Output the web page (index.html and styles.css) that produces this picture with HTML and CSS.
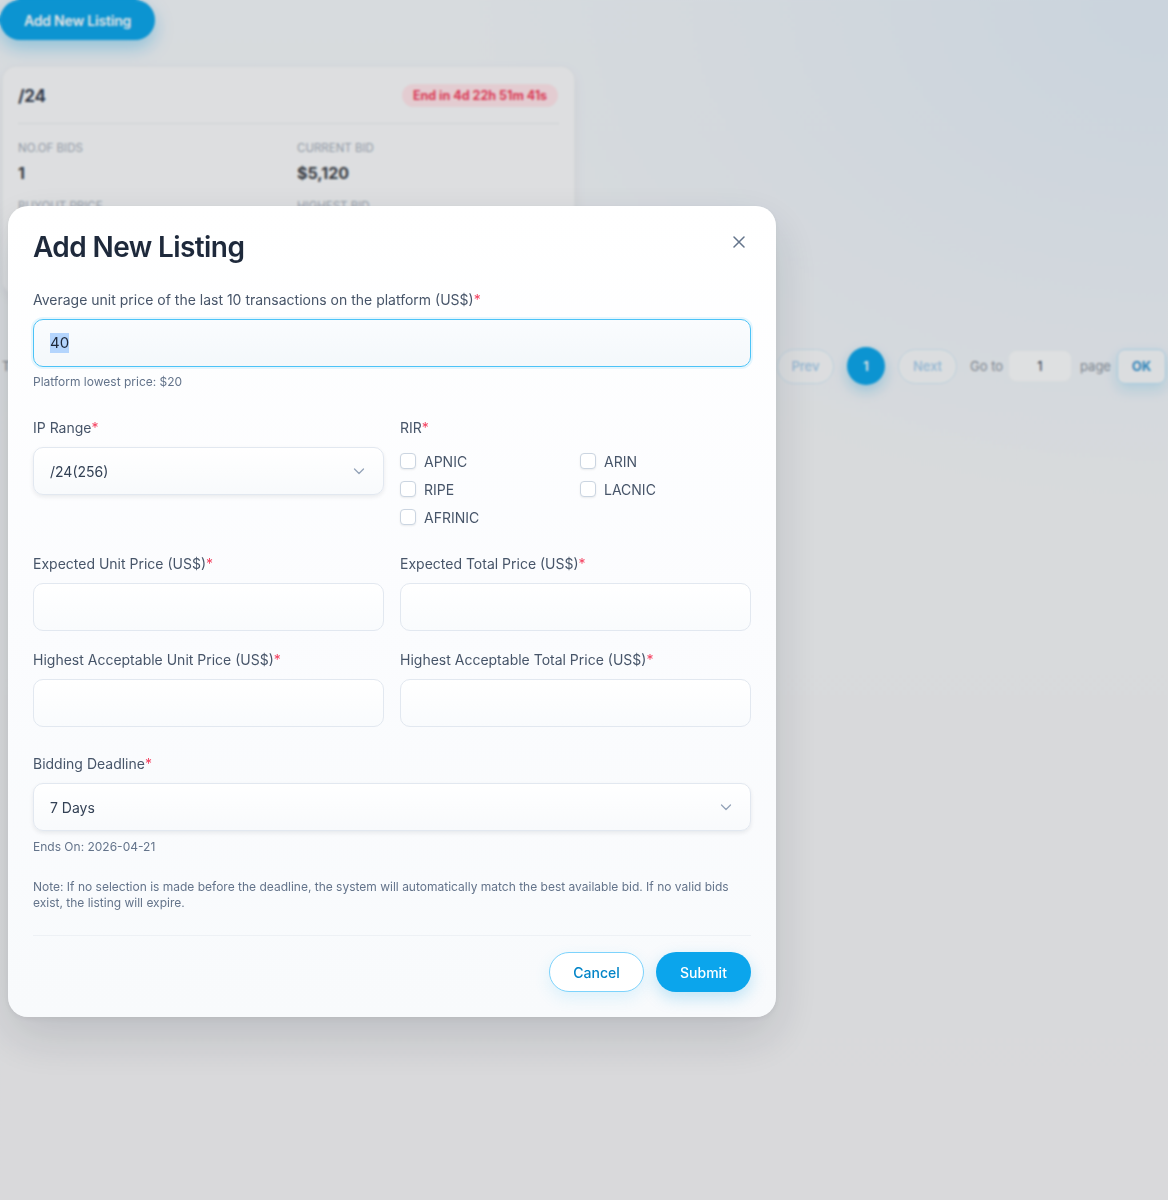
FILE: index.html
```html
<!DOCTYPE html>
<html lang="en">
<head>
<meta charset="utf-8">
<title>Add New Listing</title>
<link rel="stylesheet" href="styles.css">
</head>
<body>
<div class="page">
  <button class="btn-add">Add New Listing</button>

  <div class="card">
    <div class="card-head">
      <span class="card-title">/24</span>
      <span class="badge">End in 4d 22h 51m 41s</span>
    </div>
    <div class="card-grid">
      <div class="stat">
        <div class="stat-label">NO.OF BIDS</div>
        <div class="stat-value">1</div>
      </div>
      <div class="stat">
        <div class="stat-label">CURRENT BID</div>
        <div class="stat-value">$5,120</div>
      </div>
      <div class="stat">
        <div class="stat-label">BUYOUT PRICE</div>
        <div class="stat-value">$6,000</div>
      </div>
      <div class="stat">
        <div class="stat-label">HIGHEST BID</div>
        <div class="stat-value">$5,120</div>
      </div>
    </div>
  </div>

  <div class="pager">
    <span class="pager-total">Total 1 items</span>
    <div class="pager-right">
      <button class="pg-btn prev">Prev</button>
      <button class="pg-num">1</button>
      <button class="pg-btn next">Next</button>
      <span class="pg-text goto">Go to</span>
      <span class="pg-input">1</span>
      <span class="pg-text pagew">page</span>
      <button class="pg-ok">OK</button>
    </div>
  </div>
</div>

<div class="overlay">
  <div class="modal">
    <div class="modal-head">
      <h2 class="modal-title">Add New Listing</h2>
      <button class="close" aria-label="Close">
        <svg width="12" height="12" viewBox="0 0 12 12"><path d="M1 1L11 11M11 1L1 11" stroke="#64748b" stroke-width="1.5" stroke-linecap="round" fill="none"/></svg>
      </button>
    </div>

    <div class="field first">
      <div class="label">Average unit price of the last 10 transactions on the platform (US$)<span class="req">*</span></div>
      <div class="input focused"><span class="selected">40</span></div>
      <div class="hint">Platform lowest price: $20</div>
    </div>

    <div class="grid2 row-ip">
      <div class="field">
        <div class="label">IP Range<span class="req">*</span></div>
        <div class="select">
          <span>/24(256)</span>
          <svg class="chev" width="12" height="12" viewBox="0 0 12 12"><path d="M1.5 4L6 8.5L10.5 4" stroke="#94a3b8" stroke-width="1.3" fill="none" stroke-linecap="round" stroke-linejoin="round"/></svg>
        </div>
      </div>
      <div class="field">
        <div class="label">RIR<span class="req">*</span></div>
        <div class="checks">
          <label class="check"><span class="box"></span>APNIC</label>
          <label class="check"><span class="box"></span>ARIN</label>
          <label class="check"><span class="box"></span>RIPE</label>
          <label class="check"><span class="box"></span>LACNIC</label>
          <label class="check"><span class="box"></span>AFRINIC</label>
        </div>
      </div>
    </div>

    <div class="grid2 prices">
      <div class="field">
        <div class="label">Expected Unit Price (US$)<span class="req">*</span></div>
        <div class="input"></div>
      </div>
      <div class="field">
        <div class="label">Expected Total Price (US$)<span class="req">*</span></div>
        <div class="input"></div>
      </div>
      <div class="field">
        <div class="label">Highest Acceptable Unit Price (US$)<span class="req">*</span></div>
        <div class="input"></div>
      </div>
      <div class="field">
        <div class="label">Highest Acceptable Total Price (US$)<span class="req">*</span></div>
        <div class="input"></div>
      </div>
    </div>

    <div class="field deadline">
      <div class="label">Bidding Deadline<span class="req">*</span></div>
      <div class="select">
        <span>7 Days</span>
        <svg class="chev" width="12" height="12" viewBox="0 0 12 12"><path d="M1.5 4L6 8.5L10.5 4" stroke="#94a3b8" stroke-width="1.3" fill="none" stroke-linecap="round" stroke-linejoin="round"/></svg>
      </div>
      <div class="hint">Ends On: 2026-04-21</div>
    </div>

    <p class="note">Note: If no selection is made before the deadline, the system will automatically match the best available bid. If no valid bids exist, the listing will expire.</p>

    <div class="divider"></div>

    <div class="actions">
      <button class="btn cancel">Cancel</button>
      <button class="btn submit">Submit</button>
    </div>
  </div>
</div>
</body>
</html>
```

FILE: styles.css
```css
* { box-sizing: border-box; }

html, body {
  margin: 0;
  padding: 0;
}

body {
  width: 1168px;
  min-height: 1200px;
  font-family: Inter, "Noto Sans", "Liberation Sans", sans-serif;
  background:
    radial-gradient(ellipse 700px 500px at 100% 0%, #e2edf7 0%, rgba(226,237,247,0) 100%),
    linear-gradient(180deg, #f0f4f8 0%, #f1f3f5 45%, #f2f2f4 100%);
  color: #1e293b;
}

button {
  font-family: inherit;
  cursor: pointer;
}

/* ---------- background page ---------- */
.page {
  padding: 0;
}

.btn-add {
  display: block;
  width: 155px;
  height: 40px;
  padding: 0;
  border: none;
  border-radius: 20px;
  background: #0ea5e9;
  color: #ffffff;
  font-size: 14px;
  font-weight: 600;
  letter-spacing: -0.2px;
  box-shadow: 0 8px 18px rgba(14,165,233,0.35);
}

.card {
  margin: 26px 0 0 2px;
  width: 573px;
  height: 229px;
  padding: 17px 15px;
  border-radius: 14px;
  background: #f6f8fa;
  border: 1px solid rgba(15,23,42,0.04);
  box-shadow: 0 4px 14px rgba(15,23,42,0.05);
}

.card-head {
  display: flex;
  justify-content: space-between;
  align-items: center;
  height: 23px;
}

.card-title {
  font-size: 17px;
  font-weight: 700;
  color: #374151;
  letter-spacing: -0.3px;
}

.badge {
  width: 156px;
  height: 23px;
  line-height: 23px;
  text-align: center;
  border-radius: 12px;
  background: #fde4e9;
  color: #f43f5e;
  font-size: 12.5px;
  font-weight: 700;
  margin-right: 1px;
}

.card-grid {
  margin-top: 16px;
  border-top: 1px solid #e6e8eb;
  display: grid;
  grid-template-columns: 279px 1fr;
  padding-top: 16px;
  row-gap: 13px;
}

.stat-label {
  font-size: 11.5px;
  line-height: 16px;
  color: #a3acb8;
  text-transform: uppercase;
}

.stat-value {
  margin-top: 5px;
  font-size: 16px;
  line-height: 24px;
  font-weight: 700;
  color: #3d434a;
}

.pager {
  margin-top: 52px;
  padding: 0 2px;
  height: 38px;
  display: flex;
  justify-content: space-between;
  align-items: center;
  font-size: 13px;
}

.pager-total {
  color: #7c8590;
}

.pager-right {
  display: flex;
  align-items: center;
}

.pg-btn {
  height: 35px;
  padding: 0;
  border: 1px solid #d0e8f6;
  border-radius: 18px;
  background: rgba(255,255,255,0.4);
  color: #a4cbea;
  font-size: 13px;
  font-weight: 500;
  margin-right: 13px;
}

.pg-btn.prev { width: 57px; }
.pg-btn.next { width: 59px; }

.pg-num {
  width: 38px;
  height: 38px;
  padding: 0;
  border: none;
  border-radius: 50%;
  background: #0ea5e9;
  color: #ffffff;
  font-size: 13px;
  font-weight: 600;
  margin-right: 13px;
  box-shadow: 0 6px 14px rgba(14,165,233,0.3);
}

.pg-text {
  color: #8a939e;
  margin-right: 9px;
}

.pg-text.goto { width: 30px; white-space: nowrap; }
.pg-text.pagew { width: 28px; white-space: nowrap; }

.pg-input {
  width: 62px;
  height: 30px;
  line-height: 30px;
  text-align: center;
  border-radius: 8px;
  background: #f8fafb;
  color: #374151;
  margin-right: 9px;
}

.pg-ok {
  width: 49px;
  height: 35px;
  padding: 0;
  border: 1.5px solid #b8e1f7;
  border-radius: 8px;
  background: rgba(255,255,255,0.4);
  color: #3a95cf;
  font-size: 13px;
  font-weight: 700;
  box-shadow: 0 6px 14px rgba(14,165,233,0.18);
}

/* ---------- overlay + modal ---------- */
.overlay {
  position: fixed;
  inset: 0;
  background: rgba(0,0,0,0.1);
  backdrop-filter: blur(1px);
  -webkit-backdrop-filter: blur(1px);
  padding: 206px 0 0 8px;
}

.modal {
  width: 768px;
  padding: 24px 25px 25px;
  border-radius: 20px;
  background: linear-gradient(180deg, #ffffff 0%, #fbfcfe 50%, #f8fafc 100%);
  box-shadow: 0 20px 50px rgba(15,23,42,0.14), 0 2px 6px rgba(15,23,42,0.06);
}

.modal-head {
  display: flex;
  justify-content: space-between;
  align-items: flex-start;
}

.modal-title {
  margin: 0;
  font-size: 28px;
  line-height: 34px;
  font-weight: 600;
  letter-spacing: -0.6px;
  color: #1e293b;
}

.close {
  width: 20px;
  height: 20px;
  margin: 2px 2px 0 0;
  padding: 0;
  border: none;
  background: transparent;
  display: flex;
  align-items: center;
  justify-content: center;
}

.field.first {
  margin-top: 26px;
}

.label {
  font-size: 14px;
  line-height: 20px;
  color: #475569;
  margin-bottom: 9px;
}

.req {
  color: #f43f5e;
}

.input {
  height: 48px;
  border: 1px solid #e2e8f0;
  border-radius: 10px;
  background: linear-gradient(180deg, #ffffff 0%, #f9fbfd 100%);
  padding: 0 16px;
  display: flex;
  align-items: center;
  font-size: 15px;
  color: #334155;
}

.input.focused {
  border-color: #4cc3f7;
  box-shadow: 0 0 0 2px rgba(56,189,248,0.12);
  background: linear-gradient(180deg, #fafcfe 0%, #f4f8fb 100%);
}

.selected {
  background: #b4d5fd;
  color: #1e293b;
  line-height: 20px;
}

.hint {
  margin-top: 7px;
  font-size: 12px;
  line-height: 16px;
  color: #64748b;
}

.grid2 {
  display: grid;
  grid-template-columns: 1fr 1fr;
  column-gap: 16px;
}

.row-ip {
  margin-top: 28px;
}

.select {
  height: 48px;
  border: 1px solid #e2e8f0;
  border-radius: 10px;
  background: linear-gradient(180deg, #ffffff 0%, #f8fafc 100%);
  box-shadow: 0 2px 4px rgba(15,23,42,0.08);
  padding: 0 18px 0 16px;
  display: flex;
  align-items: center;
  justify-content: space-between;
  font-size: 14px;
  color: #334155;
}

.chev {
  flex: none;
}

.checks {
  display: grid;
  grid-template-columns: 172px 1fr;
  column-gap: 8px;
}

.check {
  height: 28px;
  display: flex;
  align-items: center;
  gap: 8px;
  font-size: 14px;
  color: #475569;
}

.box {
  width: 16px;
  height: 16px;
  border: 1px solid #cbd5e1;
  border-radius: 4px;
  background: #ffffff;
  box-shadow: 0 1px 2px rgba(15,23,42,0.08);
}

.prices {
  margin-top: 23px;
  row-gap: 19px;
}

.deadline {
  margin-top: 27px;
}

.deadline .hint {
  margin-top: 8px;
}

.note {
  margin: 24px 0 0;
  font-size: 12px;
  line-height: 16px;
  color: #64748b;
}

.divider {
  margin-top: 24px;
  height: 1px;
  background: #eef1f5;
}

.actions {
  margin-top: 16px;
  display: flex;
  justify-content: flex-end;
  gap: 12px;
}

.btn {
  width: 95px;
  height: 40px;
  border-radius: 20px;
  font-size: 14px;
  font-weight: 500;
}

.btn.cancel {
  background: #ffffff;
  border: 1px solid #7dd3fc;
  color: #0284c7;
  box-shadow: 0 6px 16px rgba(56,189,248,0.14);
}

.btn.submit {
  background: #0ba5ec;
  border: none;
  color: #ffffff;
  box-shadow: 0 6px 16px rgba(14,165,233,0.25);
}
```
